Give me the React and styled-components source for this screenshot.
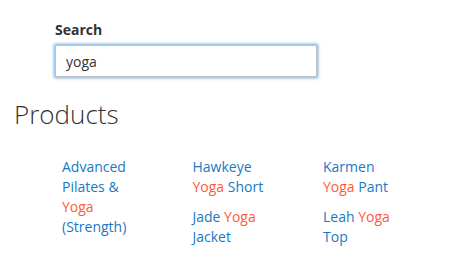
import React from "react";
import styled, { createGlobalStyle } from "styled-components";

const Global = createGlobalStyle`
  body { margin: 0; background: #fff; font-family: "Open Sans", "Liberation Sans", sans-serif; color: #333; }
`;

const Page = styled.div`
  padding: 20px 14px 0 14px;
`;

const Field = styled.div`
  padding-left: 41px;
  display: flex;
  flex-direction: column;
`;

const Label = styled.label`
  font-weight: 700;
  font-size: 14px;
  line-height: 20px;
  color: #333;
  margin-bottom: 5px;
`;

const Input = styled.input`
  box-sizing: border-box;
  width: 262px;
  height: 32px;
  border: 1px solid #c2c2c2;
  box-shadow: 0 0 3px 1px #68a8e0;
  padding: 0 10px;
  font-family: "Open Sans", "Liberation Sans", sans-serif;
  font-size: 14px;
  color: #333;
  outline: none;
`;

const Heading = styled.h2`
  margin: 20px 0 0 0;
  font-weight: 300;
  font-size: 26px;
  line-height: 34px;
  color: #333;
`;

const Grid = styled.ul`
  list-style: none;
  margin: 26px 0 0 48px;
  padding: 0;
  display: grid;
  grid-template-columns: repeat(3, 130.5px);
  row-gap: 10px;
`;

const Item = styled.li`
  grid-row: span ${(p) => p.$rows || 1};
  font-size: 14px;
  line-height: 20px;
  width: 76px;
`;

const Link = styled.a`
  color: #1979c3;
  text-decoration: none;
`;

const Hit = styled.span`
  color: #ff5a3c;
`;

const products = [
  { parts: ["Advanced Pilates & ", "Yoga", " (Strength)"], rows: 2 },
  { parts: ["Hawkeye ", "Yoga", " Short"] },
  { parts: ["Karmen ", "Yoga", " Pant"] },
  { parts: ["Jade ", "Yoga", " Jacket"] },
  { parts: ["Leah ", "Yoga", " Top"] },
];

export default function App() {
  return (
    <>
      <Global />
      <Page>
        <Field>
          <Label>Search</Label>
          <Input defaultValue="yoga" />
        </Field>
        <Heading>Products</Heading>
        <Grid>
          {products.map((p, i) => (
            <Item key={i} $rows={p.rows}>
              <Link href="#">
                {p.parts[0]}
                <Hit>{p.parts[1]}</Hit>
                {p.parts[2]}
              </Link>
            </Item>
          ))}
        </Grid>
      </Page>
    </>
  );
}
